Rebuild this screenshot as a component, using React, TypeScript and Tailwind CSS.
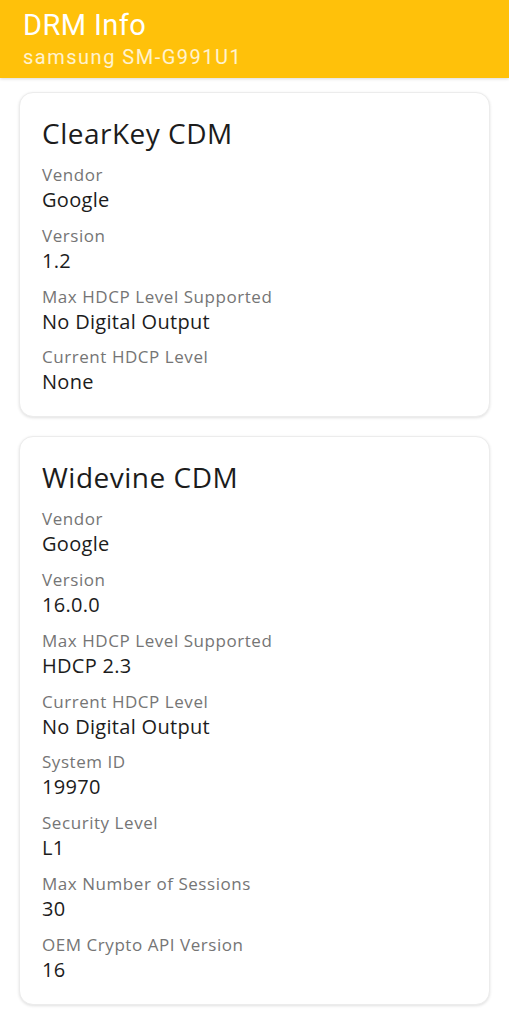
import React from "react";

type Field = { label: string; value: string };

const cards: { title: string; fields: Field[] }[] = [
  {
    title: "ClearKey CDM",
    fields: [
      { label: "Vendor", value: "Google" },
      { label: "Version", value: "1.2" },
      { label: "Max HDCP Level Supported", value: "No Digital Output" },
      { label: "Current HDCP Level", value: "None" },
    ],
  },
  {
    title: "Widevine CDM",
    fields: [
      { label: "Vendor", value: "Google" },
      { label: "Version", value: "16.0.0" },
      { label: "Max HDCP Level Supported", value: "HDCP 2.3" },
      { label: "Current HDCP Level", value: "No Digital Output" },
      { label: "System ID", value: "19970" },
      { label: "Security Level", value: "L1" },
      { label: "Max Number of Sessions", value: "30" },
      { label: "OEM Crypto API Version", value: "16" },
    ],
  },
];

function Card({ title, fields }: { title: string; fields: Field[] }) {
  return (
    <div className="bg-white rounded-[14px] border border-[#ececec] shadow-[0_1px_3px_rgba(0,0,0,0.12)] pl-[22px] pr-4 pt-[20px] pb-[11px]">
      <div className="text-[28px] leading-[40px] tracking-[0.5px] text-[#1c1c1c] mb-[9px]">{title}</div>
      {fields.map((f) => (
        <div key={f.label} className="mb-[10.8px]">
          <div className="text-[17px] leading-[25px] tracking-[0.55px] text-[#757575]">{f.label}</div>
          <div className="text-[20px] leading-[25px] tracking-[0.3px] text-[#1c1c1c]">{f.value}</div>
        </div>
      ))}
    </div>
  );
}

export default function App() {
  return (
    <div className="min-h-[1024px] bg-white">
      <div
        className="bg-[#ffc10a] h-[78px] pl-[23px] pt-[6px] shadow-[0_1px_3px_rgba(0,0,0,0.15)]"
        style={{ fontFamily: "Roboto, 'Liberation Sans', sans-serif" }}
      >
        <div className="text-[29px] leading-[38px] tracking-[0.4px] text-white">DRM Info</div>
        <div className="text-[20px] leading-[26px] tracking-[1.5px] text-white/80">samsung SM-G991U1</div>
      </div>
      <div
        className="px-[19px] pt-[14px] flex flex-col gap-[19px]"
        style={{ fontFamily: "'Open Sans', 'Noto Sans', sans-serif" }}
      >
        {cards.map((c) => (
          <Card key={c.title} title={c.title} fields={c.fields} />
        ))}
      </div>
    </div>
  );
}
